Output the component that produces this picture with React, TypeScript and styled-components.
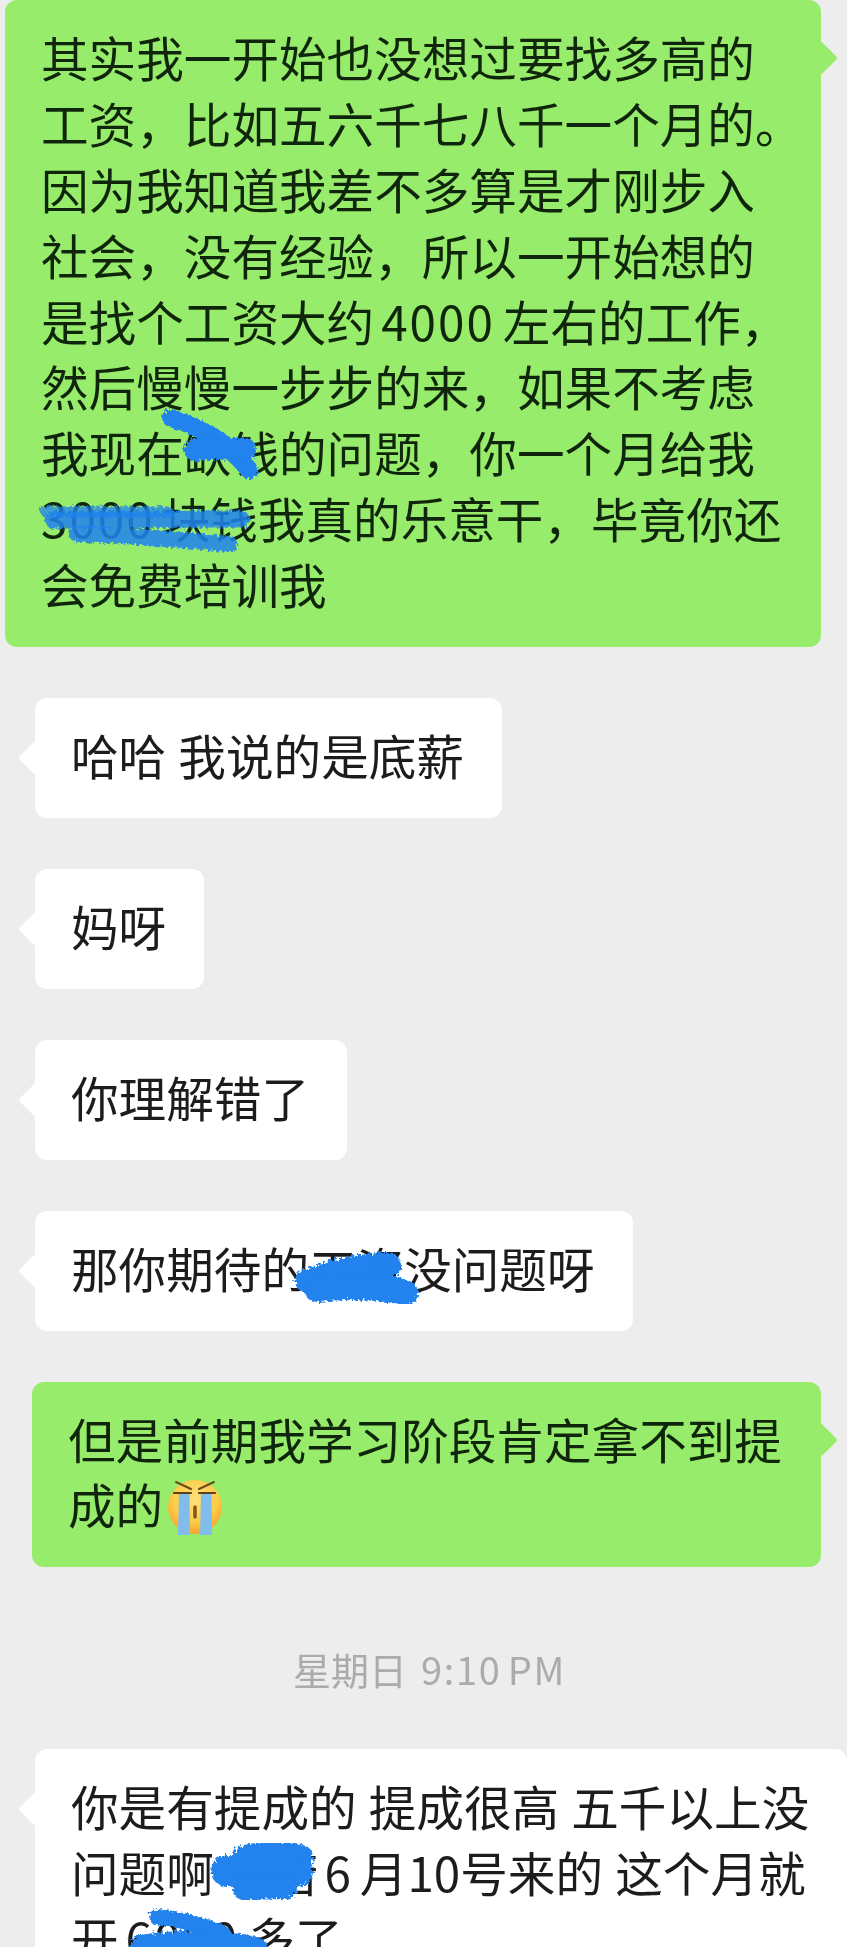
import React, { useId } from 'react';
import styled, { createGlobalStyle } from 'styled-components';

const GlobalStyle = createGlobalStyle`
  html, body {
    margin: 0;
    padding: 0;
    background-color: #ededed;
  }
`;

const Page = styled.div`
  display: flex;
  flex-direction: column;
  gap: 51px;
  box-sizing: border-box;
  width: 847px;
  height: 1947px;
  overflow: hidden;
  padding: 0 26px 0 35px;
  background-color: #ededed;
  font-family: 'Noto Sans CJK SC', 'Noto Sans', sans-serif;
  filter: blur(0.45px);
`;

const Row = styled.div<{ $mine?: boolean }>`
  display: flex;
  flex-shrink: 0;
  justify-content: ${(p) => (p.$mine ? 'flex-end' : 'flex-start')};
`;

const Bubble = styled.div<{ $mine?: boolean; $width?: number }>`
  position: relative;
  flex-shrink: 0;
  box-sizing: border-box;
  width: ${(p) => (p.$width ? `${p.$width}px` : 'auto')};
  padding: 24px 38px 30px 36px;
  border-radius: 12px;
  background-color: ${(p) => (p.$mine ? '#98ec6b' : '#fff')};
  color: ${(p) => (p.$mine ? '#10260c' : '#1c1c1c')};

  &::before {
    content: '';
    position: absolute;
    top: ${(p) => (p.$mine ? 46 : 48)}px;
    ${(p) => (p.$mine ? 'right: -12px;' : 'left: -12px;')}
    width: 24px;
    height: 24px;
    border-radius: 3px;
    background-color: inherit;
    transform: rotate(45deg);
  }
`;

const Line = styled.div`
  position: relative;
  height: 65.9px;
  font-size: 47.6px;
  line-height: 65.9px;
  white-space: pre;
  word-spacing: 1.5px;
`;

const Digits = styled.span<{ $flush?: boolean }>`
  margin: 0 8px 0 ${(p) => (p.$flush ? 0 : 7)}px;
  letter-spacing: 2px;
`;

const Date6 = styled.span`
  margin: 0 9px 0 6px;
`;

const HiddenGap = styled.span`
  display: inline-block;
  width: 57px;
`;

const TimeRow = styled.div`
  flex-shrink: 0;
  box-sizing: border-box;
  height: 80px;
  padding: 20px 0 0 3px;
  display: flex;
  align-items: center;
  justify-content: center;
  font-size: 38px;
  color: #ababab;
`;

const TimeLatin = styled.span`
  margin-left: 14px;
  letter-spacing: 1.7px;
  word-spacing: -4px;
`;

const EmojiSvg = styled.svg`
  width: 60px;
  height: 60px;
  margin-left: 2px;
  vertical-align: -14px;
`;

const ScribbleSvg = styled.svg<{ $left: number; $top: number }>`
  position: absolute;
  left: ${(p) => p.$left}px;
  top: ${(p) => p.$top}px;
  overflow: visible;
  pointer-events: none;
`;

type Stroke = { d: string; w: number; o?: number };

const Scribble = ({
  left,
  top,
  strokes,
}: {
  left: number;
  top: number;
  strokes: Stroke[];
}) => {
  const id = useId();
  return (
    <ScribbleSvg $left={left} $top={top} width="10" height="10">
      <defs>
        <filter id={id} x="-30%" y="-30%" width="160%" height="160%">
          <feTurbulence type="fractalNoise" baseFrequency="0.35" numOctaves="2" seed="4" />
          <feDisplacementMap in="SourceGraphic" scale="8" />
        </filter>
      </defs>
      <g filter={`url(#${id})`} fill="none" stroke="#2083ee" strokeLinecap="round" strokeLinejoin="round">
        {strokes.map((s) => (
          <path key={s.d} d={s.d} strokeWidth={s.w} strokeOpacity={s.o ?? 1} />
        ))}
      </g>
    </ScribbleSvg>
  );
};

const CryingFace = () => (
  <EmojiSvg viewBox="0 0 60 60">
    <defs>
      <radialGradient id="faceFill" cx="50%" cy="35%" r="70%">
        <stop offset="0%" stopColor="#ffe27a" />
        <stop offset="60%" stopColor="#fccb47" />
        <stop offset="100%" stopColor="#f39a2b" />
      </radialGradient>
    </defs>
    <circle cx="30" cy="29" r="27" fill="url(#faceFill)" />
    <path d="M14 15h10.500L25 57h-12z" fill="#80bdec" />
    <path d="M36 15h10.500L47 57h-12z" fill="#80bdec" />
    <path d="M11 4l15 7M49 4l-15 7" stroke="#6b4a1c" strokeWidth="2" strokeLinecap="round" />
    <path d="M9 15h17M34 15h16" stroke="#5c3f16" strokeWidth="2.200" strokeLinecap="round" />
    <path d="M30 29v10" stroke="#85551c" strokeWidth="3.500" strokeLinecap="round" />
  </EmojiSvg>
);

const App = () => {
  return (
    <>
      <GlobalStyle />
      <Page lang="zh-CN">
        <Row $mine>
          <Bubble $mine $width={816}>
            <Line>其实我一开始也没想过要找多高的</Line>
            <Line>工资，比如五六千七八千一个月的。</Line>
            <Line>因为我知道我差不多算是才刚步入</Line>
            <Line>社会，没有经验，所以一开始想的</Line>
            <Line>
              是找个工资大约<Digits>4000</Digits>左右的工作，
            </Line>
            <Line>然后慢慢一步步的来，如果不考虑</Line>
            <Line>我现在缺钱的问题，你一个月给我</Line>
            <Line>
              <Digits $flush>3000</Digits>块钱我真的乐意干，毕竟你还
            </Line>
            <Line>会免费培训我</Line>
            <Scribble
              left={160}
              top={412}
              strokes={[
                { d: 'M6 6 C26 12 42 20 56 30 C68 40 78 50 84 58', w: 18 },
                { d: 'M30 38 C46 36 62 37 80 37', w: 22 },
              ]}
            />
            <Scribble
              left={38}
              top={505}
              strokes={[
                { d: 'M2 6 C40 7 90 7 125 7', w: 11, o: 0.75 },
                { d: 'M10 15 C60 15 130 14 198 14', w: 17, o: 0.85 },
                { d: 'M34 29 C80 30 130 34 186 39', w: 16, o: 0.85 },
              ]}
            />
          </Bubble>
        </Row>

        <Row>
          <Bubble>
            <Line>哈哈 我说的是底薪</Line>
          </Bubble>
        </Row>
        <Row>
          <Bubble>
            <Line>妈呀</Line>
          </Bubble>
        </Row>
        <Row>
          <Bubble>
            <Line>你理解错了</Line>
          </Bubble>
        </Row>
        <Row>
          <Bubble>
            <Line>那你期待的工资没问题呀</Line>
            <Scribble
              left={262}
              top={40}
              strokes={[
                { d: 'M10 30 C36 20 64 14 92 14', w: 24 },
                { d: 'M20 38 C50 34 90 36 108 42', w: 26 },
                { d: 'M82 6 L86 18', w: 10 },
              ]}
            />
          </Bubble>
        </Row>

        <Row $mine>
          <Bubble $mine $width={789}>
            <Line>但是前期我学习阶段肯定拿不到提</Line>
            <Line>
              成的
              <CryingFace />
            </Line>
          </Bubble>
        </Row>

        <TimeRow>
          星期日<TimeLatin>9:10 PM</TimeLatin>
        </TimeRow>

        <Row>
          <Bubble $width={812}>
            <Line>你是有提成的 提成很高 五千以上没</Line>
            <Line>
              问题啊
              <HiddenGap />
              若<Date6>6</Date6>月10号来的 这个月就
            </Line>
            <Line>
              开<Digits>6000</Digits>多了
            </Line>
            <Scribble
              left={178}
              top={94}
              strokes={[
                { d: 'M32 14 C50 10 70 10 88 14', w: 24 },
                { d: 'M14 28 C46 28 66 28 84 28', w: 32 },
                { d: 'M32 46 C46 44 60 44 72 44', w: 24 },
              ]}
            />
            <Scribble
              left={97}
              top={160}
              strokes={[
                { d: 'M25 8 C50 10 70 16 90 24', w: 16 },
                { d: 'M8 36 C50 30 90 30 125 38', w: 20 },
              ]}
            />
          </Bubble>
        </Row>
      </Page>
    </>
  );
};

export default App;
